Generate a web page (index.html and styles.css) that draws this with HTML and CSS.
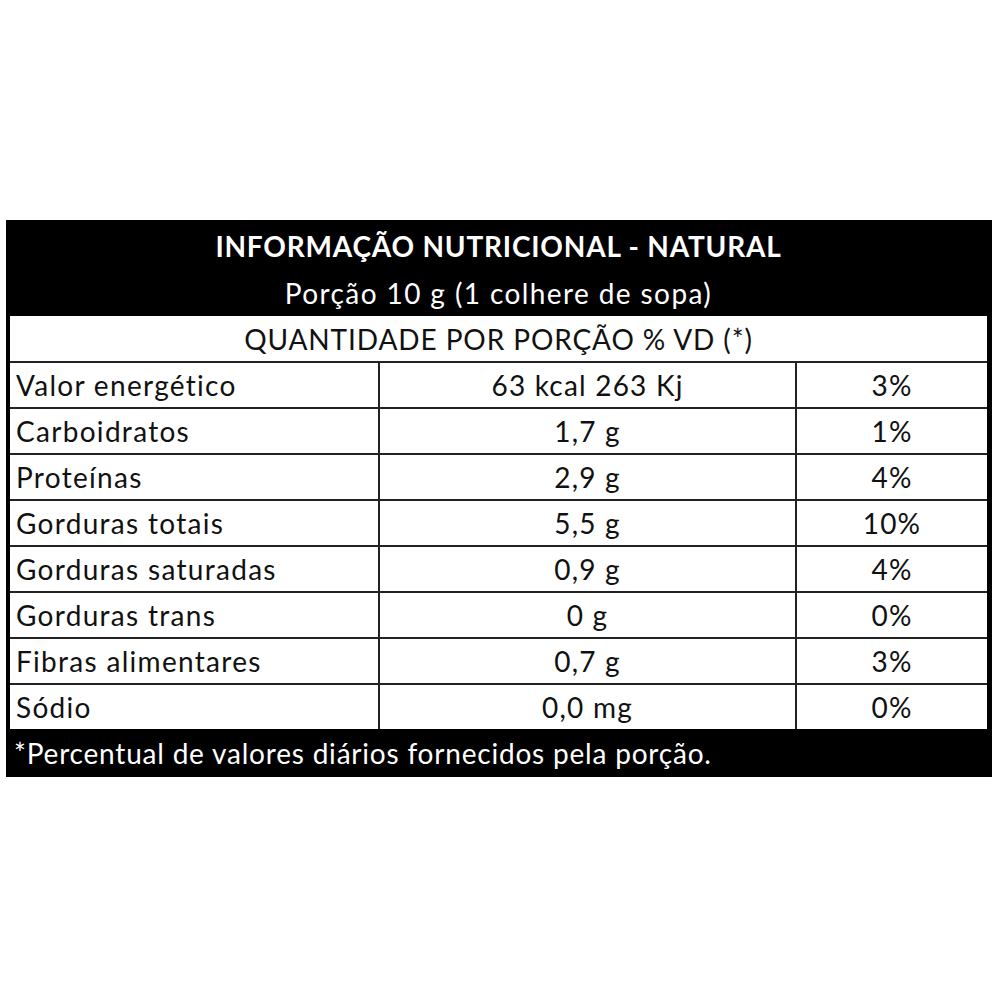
FILE: index.html
```html
<!DOCTYPE html>
<html lang="pt">
<head>
<meta charset="utf-8">
<title>Informação Nutricional</title>
<link rel="stylesheet" href="styles.css">
</head>
<body>
<div class="page">
  <div class="panel">
    <div class="title">INFORMAÇÃO NUTRICIONAL - NATURAL</div>
    <div class="portion">Porção 10 g (1 colhere de sopa)</div>
    <div class="sheet">
      <div class="qty">QUANTIDADE POR PORÇÃO % VD (*)</div>
      <div class="row"><div class="c name">Valor energético</div><div class="c val">63 kcal 263 Kj</div><div class="c pct">3%</div></div>
      <div class="row"><div class="c name">Carboidratos</div><div class="c val">1,7 g</div><div class="c pct">1%</div></div>
      <div class="row"><div class="c name">Proteínas</div><div class="c val">2,9 g</div><div class="c pct">4%</div></div>
      <div class="row"><div class="c name">Gorduras totais</div><div class="c val">5,5 g</div><div class="c pct">10%</div></div>
      <div class="row"><div class="c name">Gorduras saturadas</div><div class="c val">0,9 g</div><div class="c pct">4%</div></div>
      <div class="row"><div class="c name">Gorduras trans</div><div class="c val">0 g</div><div class="c pct">0%</div></div>
      <div class="row"><div class="c name">Fibras alimentares</div><div class="c val">0,7 g</div><div class="c pct">3%</div></div>
      <div class="row last"><div class="c name">Sódio</div><div class="c val">0,0 mg</div><div class="c pct">0%</div></div>
    </div>
    <div class="foot">*Percentual de valores diários fornecidos pela porção.</div>
  </div>
</div>
</body>
</html>
```
FILE: styles.css
```css
html, body {
  margin: 0;
  padding: 0;
  background: #fff;
}
body {
  font-family: "Lato", "Open Sans", sans-serif;
  color: #111;
}
.page {
  width: 1000px;
  height: 1000px;
  padding-top: 220px;
  box-sizing: border-box;
}
.panel {
  margin-left: 6px;
  width: 986px;
  background: #000;
  padding: 0 5px 0 4px;
  box-sizing: border-box;
}
.title {
  height: 50px;
  display: flex;
  align-items: center;
  justify-content: center;
  color: #fff;
  font-weight: 700;
  font-size: 28px;
  letter-spacing: 0.8px;
  padding-top: 2px;
  box-sizing: border-box;
}
.portion {
  height: 46px;
  display: flex;
  align-items: center;
  justify-content: center;
  color: #fff;
  font-size: 28px;
  letter-spacing: 1.4px;
}
.sheet {
  background: #fff;
}
.qty {
  height: 45px;
  display: flex;
  align-items: center;
  justify-content: center;
  font-size: 28px;
  letter-spacing: 0.9px;
  border-bottom: 2px solid #222;
}
.row {
  display: grid;
  grid-template-columns: 368px 2px 415px 2px 1fr;
  height: 46px;
  border-bottom: 2px solid #222;
  box-sizing: border-box;
}
.row.last {
  border-bottom: none;
  height: 44px;
}
.c {
  display: flex;
  align-items: center;
  font-size: 28px;
  letter-spacing: 1.2px;
}
.name {
  grid-column: 1;
  padding-left: 6px;
  letter-spacing: 1.3px;
}
.val {
  grid-column: 3;
  justify-content: center;
  border-left: 2px solid #222;
  margin-left: -2px;
}
.pct {
  grid-column: 5;
  justify-content: center;
  border-left: 2px solid #222;
  margin-left: -2px;
}
.foot {
  height: 48px;
  display: flex;
  align-items: center;
  color: #fff;
  font-size: 28px;
  letter-spacing: 0.8px;
  padding-left: 4px;
}
```
